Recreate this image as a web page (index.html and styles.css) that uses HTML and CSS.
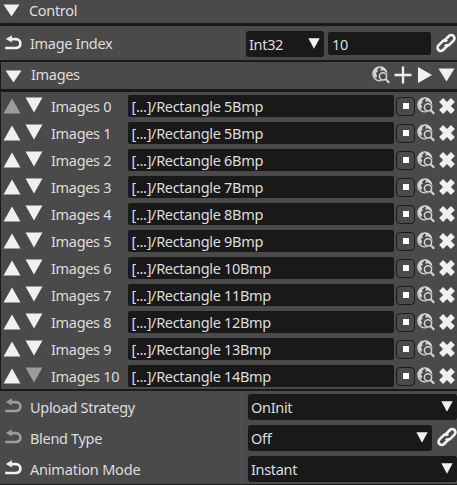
FILE: index.html
```html
<!DOCTYPE html>
<html lang="en">
<head>
<meta charset="utf-8">
<title>Control</title>
<link rel="stylesheet" href="styles.css">
</head>
<body>
<svg class="defs" aria-hidden="true">
  <symbol id="down" viewBox="0 0 18 16" preserveAspectRatio="none"><path d="M.5 .5H17.5L9 15.5Z" fill="currentColor"/></symbol>
  <symbol id="up" viewBox="0 0 18 16"><path d="M.5 15.5H17.5L9 .5Z" fill="currentColor"/></symbol>
  <symbol id="play" viewBox="0 0 14 16"><path d="M0 0L14 8L0 16Z" fill="currentColor"/></symbol>
  <symbol id="plus" viewBox="0 0 18 18"><path d="M9 .5V17.5M.5 9H17.5" stroke="currentColor" stroke-width="2.3"/></symbol>
  <symbol id="undo" viewBox="0 0 17 15"><path d="M4 4.2H11A4.4 4.4 0 0 1 11 13H.2" fill="none" stroke="currentColor" stroke-width="2.7"/><path d="M.8 4L6.8 .2V7.4Z" fill="currentColor"/></symbol>
  <symbol id="link" viewBox="0 0 20 20"><g transform="rotate(-45 10 10)" fill="none" stroke="currentColor" stroke-width="2.7"><path d="M10.4 12.8H3A3.2 3.2 0 0 1 3 6.4H8.7A3.2 3.2 0 0 1 11.9 9.6"/><path d="M9.6 7.2H17A3.2 3.2 0 0 1 17 13.6H11.3A3.2 3.2 0 0 1 8.1 10.4"/></g></symbol>
  <symbol id="globe" viewBox="0 0 18 18"><circle cx="7.8" cy="7.8" r="7" fill="none" stroke="currentColor" stroke-width="1.2"/><path d="M1 6L3 3L5.5 1.2L7 2.6L4.8 4L6 5.5L3.8 7L5 9.5L4.2 12.5L1.5 9.5ZM7 .8L11 1L14 3.5L15 6.8L12.5 5.2L11 4.2L8.2 4.8L9 2.8Z" fill="currentColor"/><circle cx="11" cy="10.3" r="4.7" fill="#4a4a4a"/><circle cx="11" cy="10.3" r="3.6" fill="none" stroke="currentColor" stroke-width="1.5"/><path d="M13.5 13L17.2 16.8" stroke="currentColor" stroke-width="2.1"/></symbol>
  <symbol id="cross" viewBox="0 0 16 16"><path d="M2.1 2.1L13.9 13.9M13.9 2.1L2.1 13.9" stroke="currentColor" stroke-width="5.6"/></symbol>
</svg>
<main class="panel">
  <header class="row control"><svg class="tri"><use href="#down"/></svg><span class="title">Control</span></header>
  <div class="row prop index">
    <svg class="undo"><use href="#undo"/></svg><span class="name">Image Index</span>
    <div class="value narrow">
      <div class="select type"><span>Int32</span><svg class="caret"><use href="#down"/></svg></div>
      <div class="input">10</div>
      <svg class="link"><use href="#link"/></svg>
    </div>
  </div>
  <section class="images">
    <header class="row images-head">
      <svg class="tri"><use href="#down"/></svg><span class="title">Images</span>
      <svg class="globe"><use href="#globe"/></svg><svg class="plus"><use href="#plus"/></svg><svg class="play"><use href="#play"/></svg><svg class="menu"><use href="#down"/></svg>
    </header>
    <div class="list" id="list"></div>
  </section>
  <div class="row prop">
    <svg class="undo off"><use href="#undo"/></svg><span class="name">Upload Strategy</span>
    <div class="value"><div class="select wide"><span>OnInit</span><svg class="caret"><use href="#down"/></svg></div></div>
  </div>
  <div class="row prop">
    <svg class="undo off"><use href="#undo"/></svg><span class="name">Blend Type</span>
    <div class="value"><div class="select"><span>Off</span><svg class="caret"><use href="#down"/></svg></div><svg class="link"><use href="#link"/></svg></div>
  </div>
  <div class="row prop">
    <svg class="undo"><use href="#undo"/></svg><span class="name mode">Animation Mode</span>
    <div class="value"><div class="select wide"><span>Instant</span><svg class="caret"><use href="#down"/></svg></div></div>
  </div>
</main>
<script src="list.js"></script>
</body>
</html>
```
FILE: styles.css
```css
* { box-sizing: border-box; }
body {
  margin: 0;
  background: #4a4a4a;
  color: #dedede;
  font: 14.5px/20px "Noto Sans", "Open Sans", sans-serif;
  letter-spacing: -0.32px;
  overflow: hidden;
}
svg { display: block; flex: none; color: #f0f0f0; }
.defs { position: absolute; width: 0; height: 0; }
.panel { width: 457px; height: 485px; border-bottom: 1px solid #191919; }
.row { display: flex; align-items: center; white-space: nowrap; }
.tri { width: 17px; height: 13px; }
.control { height: 26px; padding: 0 0 3px 3px; border-bottom: 3px solid #191919; }
.control .title { margin: -1px 0 0 9px; }
.prop { height: 31px; padding-left: 5px; }
.undo { width: 17px; height: 15px; margin-top: -2px; }
.off { color: #9b9b9b; }
.name { width: 211px; margin-left: 8px; }
.mode { letter-spacing: -0.2px; }
.value { display: flex; align-items: center; flex: 1; height: 28px; padding-left: 6px; border-left: 1px dotted #5c5c5c; }
.select { display: flex; align-items: center; justify-content: space-between; width: 184px; height: 26px; padding: 0 4px 0 3px; background: #191919; border-radius: 3px; }
.select.wide { width: 209px; }
.caret { width: 12px; height: 11px; margin-top: -1px; }
.link { width: 20px; height: 20px; margin: -1px 0 0 5px; }
.index { height: 34px; padding-top: 1px; }
.index .name { margin-top: -2px; }
.narrow { padding-left: 4px; }
.select.type { width: 78px; }
.input { width: 103px; height: 23px; margin: -1px 0 0 4px; padding: 2px 4px; background: #191919; border-radius: 2px; }
.narrow .link { margin: -2px 0 0 5px; }
.images { border: solid #191919; border-width: 2px 0 2px 1px; }
.images-head { height: 30px; padding: 0 2px 1px 4px; border-bottom: 3px solid #191919; }
.images-head .tri { margin-top: 2px; }
.images-head .title { flex: 1; margin: -2px 0 0 9px; }
.globe { width: 18px; height: 18px; color: #d5d5d5; }
.plus { width: 18px; height: 18px; margin-left: 4px; }
.play { width: 14px; height: 16px; margin-left: 6px; }
.menu { width: 17px; height: 14px; margin-left: 6px; }
.item { height: 27px; padding-left: 2px; }
.arrow { width: 18px; height: 16px; }
.arrow + .arrow { margin: -1px 0 0 4px; }
.label { width: 77px; margin-left: 8px; }
.path { width: 266px; height: 22px; margin-top: 1px; padding: 1px 3.5px; background: #191919; border-radius: 2px; }
.check { display: grid; place-items: center; width: 19px; height: 19px; margin: 1px 0 0 2px; border: 1px solid #1c1c1c; border-radius: 4px; }
.check::after { content: ""; width: 6px; height: 6px; background: #fff; }
.item .globe { margin-left: 2px; }
.cross { width: 16px; height: 16px; margin-left: 4px; }
```
FILE: list.js
```js
const rectangles = [5, 5, 6, 7, 8, 9, 10, 11, 12, 13, 14];
const icon = (id, cls) => `<svg class="${cls}"><use href="#${id}"/></svg>`;

document.getElementById("list").innerHTML = rectangles.map((n, i) => `
  <div class="row item">
    ${icon("up", i === 0 ? "arrow off" : "arrow")}
    ${icon("down", i === rectangles.length - 1 ? "arrow off" : "arrow")}
    <span class="label">Images ${i}</span>
    <div class="path">[...]/Rectangle ${n}Bmp</div>
    <div class="check"></div>
    ${icon("globe", "globe")}
    ${icon("cross", "cross")}
  </div>`).join("");
```
